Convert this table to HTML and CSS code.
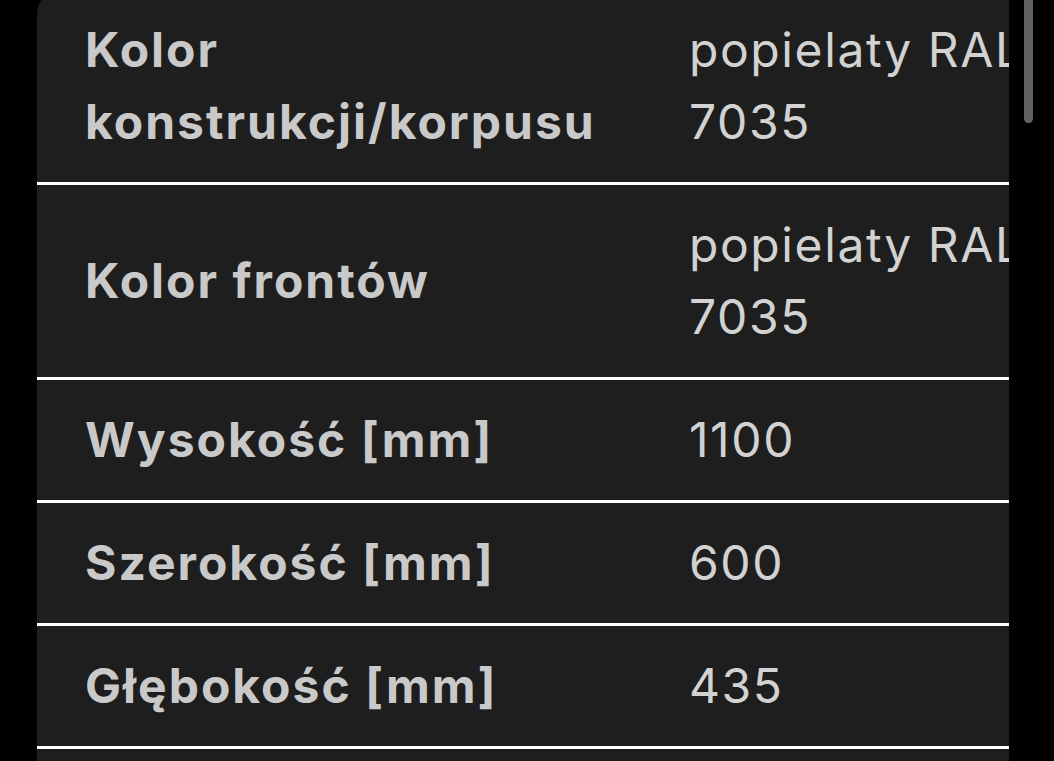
FILE: index.html
```html
<!DOCTYPE html>
<html lang="pl">
<head>
<meta charset="utf-8">
<title>Specyfikacja</title>
<link rel="stylesheet" href="styles.css">
</head>
<body>
<div class="screen">
  <div class="viewport">
    <div class="card">
      <div class="row">
        <div class="label">Kolor konstrukcji/korpusu</div>
        <div class="value"><span class="value-text">popielaty RAL 7035</span></div>
      </div>
      <div class="row">
        <div class="label">Kolor frontów</div>
        <div class="value"><span class="value-text">popielaty RAL 7035</span></div>
      </div>
      <div class="row">
        <div class="label">Wysokość [mm]</div>
        <div class="value"><span class="value-text">1100</span></div>
      </div>
      <div class="row">
        <div class="label">Szerokość [mm]</div>
        <div class="value"><span class="value-text">600</span></div>
      </div>
      <div class="row">
        <div class="label">Głębokość [mm]</div>
        <div class="value"><span class="value-text">435</span></div>
      </div>
    </div>
  </div>
  <div class="scroll-track">
    <div class="scroll-thumb"></div>
  </div>
</div>
</body>
</html>
```
FILE: styles.css
```css
html, body {
  margin: 0;
  padding: 0;
  background: #000;
  height: 100%;
  overflow: hidden;
}

.screen {
  display: flex;
  height: 761px;
  width: 1054px;
}

.viewport {
  width: 972px;
  margin-left: 37px;
  overflow: hidden;
}

.card {
  margin-top: -10px;
  min-height: 800px;
  background: #1e1e1e;
  border-top-left-radius: 24px;
  overflow: hidden;
  font-family: "Inter", "Liberation Sans", sans-serif;
}

.row {
  display: grid;
  grid-template-columns: 652px 1fr;
  align-items: center;
  padding: 24px 0;
  border-bottom: 3px solid #ffffff;
  line-height: 72px;
  font-size: 48px;
}

.label {
  padding-left: 48px;
  font-weight: 700;
  color: #c9c9c9;
  letter-spacing: 2px;
}

.value {
  min-width: 0;
  color: #d2d2d2;
  font-weight: 400;
  letter-spacing: 1.6px;
}

.value-text {
  display: block;
  width: 360px;
}

.scroll-track {
  flex: 1;
}

.scroll-thumb {
  margin-left: 15px;
  width: 9px;
  height: 123px;
  background: #626262;
  border-radius: 0 0 5px 5px;
}
```
